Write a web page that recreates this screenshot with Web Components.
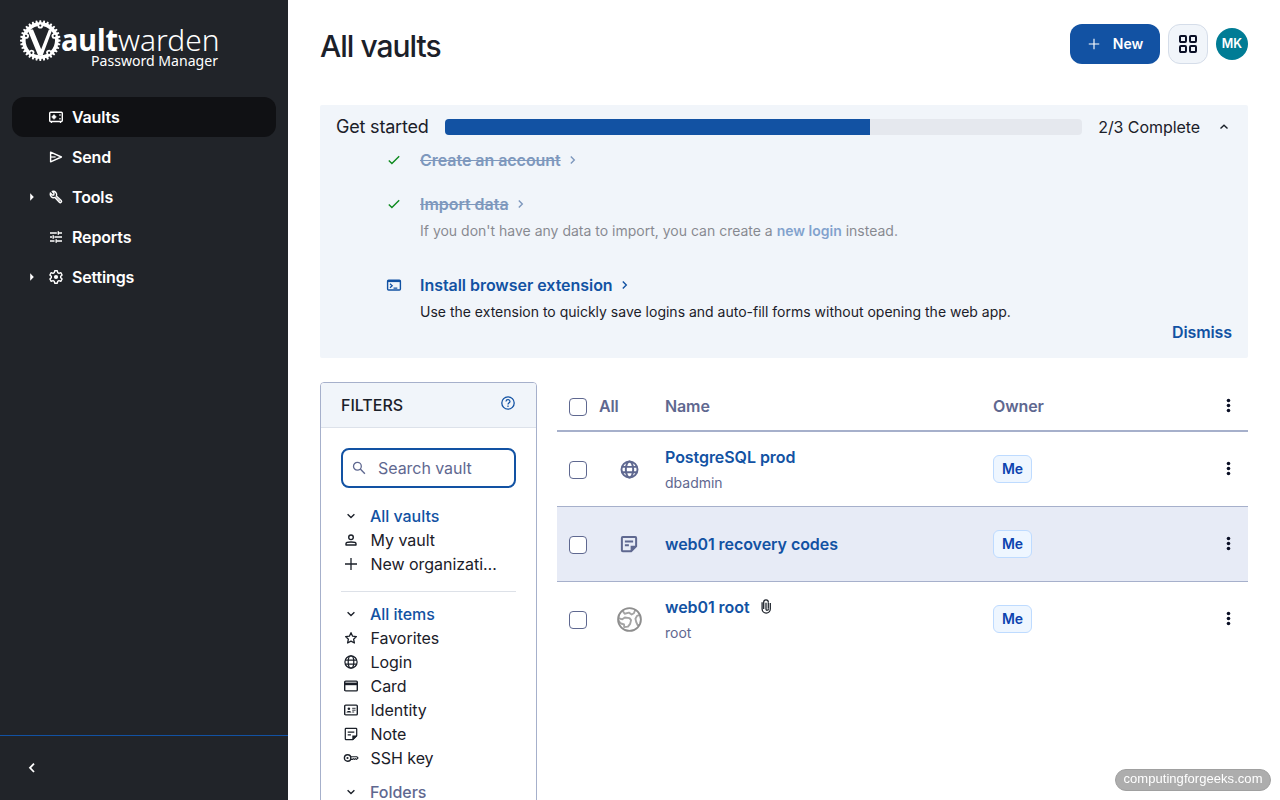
<!DOCTYPE html>
<html lang="en">
<head>
<meta charset="utf-8">
<title>All vaults | Vaultwarden</title>
<style>
  body {
    margin: 0;
    height: 100vh;
    overflow: hidden;
    font-family: Inter, "Liberation Sans", sans-serif;
    font-size: 16px;
    line-height: 24px;
    color: #1b2029;
    --primary: #1252a3;
    --muted: #5f6890;
    --line: #a6b0cb;
    --soft: #f1f5fa;
    --dark: #212429;
  }
</style>
</head>
<body>
<vw-app>
  <vw-sidebar slot="side">
    <vw-nav-item icon="vault" active>Vaults</vw-nav-item>
    <vw-nav-item icon="send">Send</vw-nav-item>
    <vw-nav-item icon="wrench" expandable>Tools</vw-nav-item>
    <vw-nav-item icon="sliders">Reports</vw-nav-item>
    <vw-nav-item icon="cog" expandable>Settings</vw-nav-item>
  </vw-sidebar>
  <vw-header initials="MK">All vaults</vw-header>
  <vw-onboarding done="2" total="3">
    <vw-task icon="check" done label="Create an account"></vw-task>
    <vw-task icon="check" done label="Import data">If you don't have any data to import, you can create a <b>new login</b> instead.</vw-task>
    <vw-task icon="terminal" label="Install browser extension">Use the extension to quickly save logins and auto-fill forms without opening the web app.</vw-task>
  </vw-onboarding>
  <vw-filters slot="filters">
    <vw-filter icon="down" heading>All vaults</vw-filter>
    <vw-filter icon="user">My vault</vw-filter>
    <vw-filter icon="plus">New organization</vw-filter>
    <hr>
    <vw-filter icon="down" heading>All items</vw-filter>
    <vw-filter icon="star">Favorites</vw-filter>
    <vw-filter icon="globe">Login</vw-filter>
    <vw-filter icon="card">Card</vw-filter>
    <vw-filter icon="identity">Identity</vw-filter>
    <vw-filter icon="note">Note</vw-filter>
    <vw-filter icon="key">SSH key</vw-filter>
    <vw-filter icon="down" heading quiet>Folders</vw-filter>
  </vw-filters>
  <vw-table slot="items">
    <vw-row icon="globe" name="PostgreSQL prod" sub="dbadmin"></vw-row>
    <vw-row icon="note" name="web01 recovery codes" hovered></vw-row>
    <vw-row icon="earth" name="web01 root" sub="root" attachment></vw-row>
  </vw-table>
</vw-app>
<vw-stamp>computingforgeeks.com</vw-stamp>

<script>
// 16x16 icons, drawn with currentColor
const ICONS = {
  vault: '<rect x="1.7" y="3.2" width="12.6" height="9.3" rx="1" stroke-width="1.4"/><path d="M3.5 12.5v1.5M12.5 12.5v1.5M12 5.2v1.6M12 9v1.6"/><circle cx="6" cy="7.9" r="1.9" fill="currentColor" stroke="none"/><path d="M6 5.2v5.4M3.4 7.9h5.2" stroke-width=".8"/>',
  send: '<path d="M2.6 3.2 13.4 8 2.6 12.8Z" stroke-width="1.4" stroke-linejoin="round"/><path d="M2.6 8h5"/>',
  wrench: '<path d="M2.4 4.1a3.4 3.4 0 0 0 4.5 4.3l4.5 4.8a1.2 1.2 0 0 0 1.8-1.7L8.4 7.1A3.4 3.4 0 0 0 4.3 2.5L6 4.3 5.8 6 4.2 6Z" stroke-width="1.4" stroke-linejoin="round"/><path d="m7.5 8 4.8 4.5" stroke-width="1"/>',
  sliders: '<path d="M2 4h6.8M11 4h3M10.3 2.3v3.4M2 8h2M6.4 8H14M5.2 6.3v3.4M2 12h4.5M9 12h5M8.2 10.3v3.4" stroke-width="1.4"/>',
  cog: '<path d="M6.7 1.8h2.6l.4 1.8 1.3.7 1.8-.6 1.3 2.3-1.4 1.3v1.4l1.4 1.3-1.3 2.3-1.8-.6-1.3.7-.4 1.8H6.7l-.4-1.8-1.3-.7-1.8.6L1.9 10l1.4-1.3V7.3L1.9 6l1.3-2.3 1.8.6 1.3-.7Z" stroke-width="1.4" stroke-linejoin="round"/><circle cx="8" cy="8" r="2.1" fill="currentColor" stroke="none"/>',
  expand: '<path d="M6.2 4.3 9.8 8l-3.6 3.7Z" fill="currentColor" stroke="none"/>',
  left: '<path d="M10 3.6 6 7.8l4 4.2" stroke-width="1.8"/>',
  right: '<path d="m5.8 4.5 3.5 3.5-3.5 3.5" stroke-width="1.4"/>',
  up: '<path d="m4.5 9.6 3.5-3.4 3.5 3.4" stroke-width="1.4"/>',
  down: '<path d="M4.6 6.3 8 9.5l3.4-3.2" stroke-width="1.4"/>',
  plus: '<path d="M8 2v12M2 8h12" stroke-width="1.3"/>',
  check: '<path d="m2.8 8.5 3.1 3.1 7.3-7.4" stroke-width="1.4"/>',
  terminal: '<rect x="1.6" y="3.2" width="12.8" height="9.8" rx="1" stroke-width="1.4"/><path d="M1.6 4.1h12.8" stroke-width="2"/><path d="m4 6.7 2.2 2L4 10.7M7.5 11h3.8"/>',
  help: '<circle cx="8" cy="8" r="6.2" stroke-width="1.3"/><path d="M6 6.4c.1-2.5 4-2.3 4 0 0 1.3-2 1.4-2 3.1M8 10.6v1.3" stroke-width="1.2"/>',
  search: '<circle cx="6.4" cy="6.2" r="3.9" stroke-width="1.3"/><path d="m9.3 9.1 4.6 4.6" stroke-width="1.4"/>',
  user: '<circle cx="8" cy="5.3" r="2.3" stroke-width="1.4"/><path d="M3 13v-1.3c0-2.2 10-2.2 10 0V13Z" stroke-width="1.4" stroke-linejoin="round"/>',
  star: '<path d="m8 2.7 1.6 3.5 3.8.4-2.8 2.6.8 3.8L8 11.1 4.6 13l.8-3.8-2.8-2.6 3.8-.4Z" stroke-width="1.3" stroke-linejoin="round"/>',
  globe: '<circle cx="8" cy="8" r="6.1"/><ellipse cx="8" cy="8" rx="2.8" ry="6.1"/><path d="M2.2 6h11.6M2.2 10.1h11.6"/>',
  card: '<rect x="1.7" y="3.1" width="12.6" height="9.8" rx="1" stroke-width="1.4"/><path d="M1.7 5.9h12.6" stroke-width="2.6"/>',
  identity: '<rect x="1.7" y="3.1" width="12.6" height="9.8" rx="1" stroke-width="1.4"/><circle cx="5.9" cy="6.7" r="1.3" fill="currentColor" stroke="none"/><path d="M3.4 10.6c0-2.3 5-2.3 5 0Z" fill="currentColor" stroke="none"/><path d="M9.2 6.3h3.4M9.2 8.2h3.4M9.2 10h2" stroke-width=".9"/>',
  note: '<path d="M3 2.4h10q.7 0 .7.7v6.6l-4 4H3q-.7 0-.7-.7V3.1q0-.7.7-.7Z"/><path d="M9.3 14V9.4H14v.9L10.2 14Z" fill="currentColor" stroke="none"/><path d="M4.7 6h6.6M4.7 8.9h3.2"/>',
  key: '<circle cx="4.6" cy="8" r="3.2" stroke-width="1.4"/><circle cx="4.5" cy="8" r="1.1" fill="currentColor" stroke="none"/><path d="M7.8 6.8h6.1L15 8l-1.4 1.4-1.2-.7-1 .7-1.1-.7-.8.7H7.8" stroke-width="1.1"/>',
  earth: '<path d="M3.6 2.5 4.9 4.3 7.6 3.6 9.4 4.8 10.8 4 11.6 2M1 7.2l2.4.7L5 6.7l3 .4 1 1.3-.6 2.4L7 12.6l-2.4.3-.1-1.7-2.3-.8L1 8.6M14.6 5.1l-1.8.6-1 1.8.5 2.1.9 2 1.2-.2" stroke="#a4a4a4" stroke-width="1.2" stroke-linejoin="round"/><circle cx="8" cy="8" r="7.3"/>',
  clip: '<path d="M10.3 4.2v6.6M5.7 10.9V4.1a2.3 2.3 0 0 1 4.6 0M12.3 5v6a4.1 4.1 0 0 1-8.2 0V4.3M8 4.8v6.4a1.1 1.1 0 0 0 2.3-.2" stroke-width="1.25"/>',
  dots: '<circle cx="8" cy="2.600" r="1.9" fill="currentColor" stroke="none"/><circle cx="8" cy="8" r="1.9" fill="currentColor" stroke="none"/><circle cx="8" cy="13.400" r="1.9" fill="currentColor" stroke="none"/>',
  grid: '<rect x=".9" y=".9" width="5.300" height="5.300" rx=".8"/><rect x="9.800" y=".9" width="5.300" height="5.300" rx=".8"/><rect x=".9" y="9.800" width="5.300" height="5.300" rx=".8"/><rect x="9.800" y="9.800" width="5.300" height="5.300" rx=".8"/>'
}

class Icon extends HTMLElement {
  connectedCallback() {
    if (this.shadowRoot) return
    const size = this.getAttribute('size') || 16
    const weight = this.getAttribute('weight') || 1.25
    this.attachShadow({ mode: 'open' }).innerHTML = `
      <style>
        :host { display: inline-flex; flex: none; }
        svg { display: block; overflow: visible; }
      </style>
      <svg width="${size}" height="${size}" viewBox="0 0 16 16" fill="none" stroke="currentColor" stroke-width="${weight}">${ICONS[this.getAttribute('name')]}</svg>
    `
  }
}
customElements.define('vw-icon', Icon)

class App extends HTMLElement {
  constructor() {
    super()
    this.attachShadow({ mode: 'open' }).innerHTML = `
      <style>
        :host {
          display: grid;
          grid-template-columns: 288px 1fr;
          height: 100vh;
          background: #fff;
        }
        main {
          padding: 24px 32px 0;
          overflow: hidden;
        }
        .columns {
          display: grid;
          grid-template-columns: 217px 1fr;
          gap: 20px;
          align-items: start;
          margin-top: 24px;
        }
      </style>
      <slot name="side"></slot>
      <main>
        <slot></slot>
        <div class="columns">
          <slot name="filters"></slot>
          <slot name="items"></slot>
        </div>
      </main>
    `
  }
}
customElements.define('vw-app', App)

class Logo extends HTMLElement {
  constructor() {
    super()
    let teeth = ''
    for (let i = 0; i < 32; i++) {
      teeth += `<path d="M-1.3-17.5-.8-20.3H.8L1.3-17.5Z" transform="rotate(${i * 11.25})"/>`
    }
    let bolts = ''
    for (let i = 0; i < 5; i++) {
      bolts += `<g transform="rotate(${i * 72})"><circle cy="-14.7" r="2.7"/><circle cy="-15" r="1.1" fill="#212429"/></g>`
    }
    this.attachShadow({ mode: 'open' }).innerHTML = `
      <style>
        :host { display: block; }
        svg { display: block; }
        text { font-family: "Noto Sans", "Open Sans", sans-serif; fill: #fff; }
      </style>
      <svg width="204" height="56" viewBox="18 16 204 56">
        <g transform="translate(40.3 40.600)" fill="#fff">
          <circle r="16.500" fill="none" stroke="#fff" stroke-width="3.600"/>
          ${teeth}${bolts}
          <path d="M-12.800-11H-7.300L.9 8.600 8.600-11h3.400L2.300 15H-2.200Z"/>
        </g>
        <text x="61" y="51" font-size="29.500" font-weight="700" textLength="57" lengthAdjust="spacingAndGlyphs">ault</text>
        <text x="118" y="51" font-size="29" font-weight="300" textLength="101.500" lengthAdjust="spacingAndGlyphs">warden</text>
        <text x="91" y="65.500" font-size="14.500" textLength="127" lengthAdjust="spacingAndGlyphs">Password Manager</text>
      </svg>
    `
  }
}
customElements.define('vw-logo', Logo)

class Sidebar extends HTMLElement {
  constructor() {
    super()
    this.attachShadow({ mode: 'open' }).innerHTML = `
      <style>
        :host {
          display: flex;
          flex-direction: column;
          background: var(--dark);
          color: #fff;
        }
        header { padding: 16px 18px 25px; }
        nav {
          flex: 1;
          padding: 0 12px;
        }
        footer {
          display: flex;
          align-items: center;
          height: 64px;
          padding-left: 24px;
          border-top: 1px solid var(--primary);
        }
      </style>
      <header><vw-logo></vw-logo></header>
      <nav><slot></slot></nav>
      <footer><vw-icon name="left"></vw-icon></footer>
    `
  }
}
customElements.define('vw-sidebar', Sidebar)

class NavItem extends HTMLElement {
  connectedCallback() {
    if (this.shadowRoot) return
    this.attachShadow({ mode: 'open' }).innerHTML = `
      <style>
        :host {
          display: grid;
          grid-template-columns: 16px 16px 1fr;
          gap: 8px;
          align-items: center;
          height: 40px;
          padding: 0 12px;
          border-radius: 12px;
          font-weight: 600;
          letter-spacing: -.15px;
        }
        :host([active]) { background: #101114; }
        .arrow { display: flex; }
      </style>
      <span class="arrow">${this.hasAttribute('expandable') ? '<vw-icon name="expand"></vw-icon>' : ''}</span>
      <vw-icon name="${this.getAttribute('icon')}"></vw-icon>
      <slot></slot>
    `
  }
}
customElements.define('vw-nav-item', NavItem)

class Header extends HTMLElement {
  connectedCallback() {
    if (this.shadowRoot) return
    this.attachShadow({ mode: 'open' }).innerHTML = `
      <style>
        :host {
          display: flex;
          align-items: flex-start;
          gap: 8px;
          height: 81px;
        }
        h1 {
          flex: 1;
          margin: 4px 0 0;
          font-size: 30px;
          line-height: 36px;
          font-weight: 500;
          letter-spacing: -1px;
        }
        button {
          box-sizing: border-box;
          display: flex;
          align-items: center;
          justify-content: center;
          height: 40px;
          padding: 0;
          border: 0;
          border-radius: 12px;
          font: 600 14px/20px Inter, sans-serif;
        }
        .new {
          width: 90px;
          gap: 12px;
          background: var(--primary);
          color: #fff;
        }
        .apps {
          width: 40px;
          border: 1px solid #d5dde9;
          background: var(--soft);
          color: #0b1026;
        }
        .avatar {
          display: grid;
          place-items: center;
          width: 32px;
          height: 32px;
          margin-top: 4px;
          border-radius: 50%;
          background: #007c95;
          color: #fff;
          font-size: 12.500px;
          font-weight: 600;
        }
      </style>
      <h1><slot></slot></h1>
      <button class="new"><vw-icon name="plus" size="14"></vw-icon>New</button>
      <button class="apps"><vw-icon name="grid" size="18" weight="1.78"></vw-icon></button>
      <div class="avatar">${this.getAttribute('initials')}</div>
    `
  }
}
customElements.define('vw-header', Header)

class Onboarding extends HTMLElement {
  connectedCallback() {
    if (this.shadowRoot) return
    const done = this.getAttribute('done')
    const total = this.getAttribute('total')
    this.attachShadow({ mode: 'open' }).innerHTML = `
      <style>
        :host {
          box-sizing: border-box;
          display: flex;
          flex-direction: column;
          height: 253px;
          padding: 8px 16px 12px;
          border-radius: 2px;
          background: var(--soft);
        }
        .top {
          display: flex;
          flex: none;
          align-items: center;
          gap: 16px;
          height: 28px;
        }
        .title { font-size: 18px; letter-spacing: -.2px; }
        .count { letter-spacing: -.07px; }
        .bar {
          flex: 1;
          height: 16px;
          border-radius: 4px;
          background: #e5e8ee;
          overflow: hidden;
        }
        .bar div {
          width: ${done / total * 100}%;
          height: 100%;
          background: var(--primary);
        }
        .tasks {
          flex: 1;
          min-height: 0;
          padding: 7px 0 0 50px;
        }
        .dismiss {
          align-self: flex-end;
          flex: none;
          height: 26px;
          color: var(--primary);
          font-weight: 600;
          letter-spacing: -.1px;
        }
      </style>
      <div class="top">
        <span class="title">Get started</span>
        <div class="bar"><div></div></div>
        <span class="count">${done}/${total} Complete</span>
        <vw-icon name="up"></vw-icon>
      </div>
      <div class="tasks"><slot></slot></div>
      <span class="dismiss">Dismiss</span>
    `
  }
}
customElements.define('vw-onboarding', Onboarding)

class Task extends HTMLElement {
  connectedCallback() {
    if (this.shadowRoot) return
    this.attachShadow({ mode: 'open' }).innerHTML = `
      <style>
        :host {
          display: grid;
          grid-template-columns: 16px 1fr;
          column-gap: 18px;
          margin-bottom: 20px;
          color: var(--primary);
        }
        :host(:last-child) { margin-bottom: 0; }
        .mark { margin-top: 4px; }
        .label {
          display: flex;
          align-items: center;
          gap: 4px;
          font-weight: 600;
          letter-spacing: -.04px;
        }
        p {
          margin: 5px 0 12px;
          font-size: 14px;
          line-height: 20px;
          color: #1b2029;
        }
        :host(:last-child) p { margin-bottom: 0; }
        ::slotted(b) { color: var(--primary); font-weight: 600; }
        :host([done]) .mark { color: #0e8a1e; }
        :host([done]) .label { color: #7e98bd; }
        :host([done]) p { opacity: .5; }
        :host([done]) .label span { text-decoration: line-through; }
      </style>
      <vw-icon class="mark" name="${this.getAttribute('icon')}"></vw-icon>
      <div>
        <div class="label"><span>${this.getAttribute('label')}</span><vw-icon name="right"></vw-icon></div>
        ${this.textContent.trim() ? '<p><slot></slot></p>' : ''}
      </div>
    `
  }
}
customElements.define('vw-task', Task)

class Filters extends HTMLElement {
  constructor() {
    super()
    this.attachShadow({ mode: 'open' }).innerHTML = `
      <style>
        :host {
          box-sizing: border-box;
          display: block;
          height: 440px;
          border: 1px solid var(--line);
          border-radius: 4px;
          overflow: hidden;
        }
        header {
          display: flex;
          align-items: center;
          justify-content: space-between;
          height: 44px;
          padding: 0 20px;
          border-bottom: 1px solid #dde2ea;
          background: var(--soft);
          font-weight: 500;
        }
        header vw-icon { color: var(--primary); margin-top: -4px; }
        .body { padding: 20px; }
        .search {
          box-sizing: border-box;
          display: flex;
          align-items: center;
          gap: 11px;
          height: 40px;
          margin-bottom: 16px;
          padding-left: 8px;
          border: 2px solid var(--primary);
          border-radius: 8px;
          color: var(--muted);
          letter-spacing: -.05px;
        }
        ::slotted(hr) {
          height: 1px;
          margin: 15px 0 10px;
          border: 0;
          background: #dde1e8;
        }
      </style>
      <header>FILTERS<vw-icon name="help"></vw-icon></header>
      <div class="body">
        <div class="search"><vw-icon name="search"></vw-icon>Search vault</div>
        <slot></slot>
      </div>
    `
  }
}
customElements.define('vw-filters', Filters)

class Filter extends HTMLElement {
  connectedCallback() {
    if (this.shadowRoot) return
    this.attachShadow({ mode: 'open' }).innerHTML = `
      <style>
        :host {
          display: flex;
          align-items: center;
          gap: 11.500px;
          height: 24px;
          padding: 0 16px 0 2px;
          letter-spacing: -.04px;
        }
        :host([heading]) { gap: 11px; }
        :host([quiet]) { margin-top: 10px; }
        span {
          overflow: hidden;
          white-space: nowrap;
          text-overflow: ellipsis;
        }
        :host([heading]) span { color: var(--primary); font-weight: 500; }
        :host([quiet]) span { color: var(--muted); }
      </style>
      <vw-icon name="${this.getAttribute('icon')}"></vw-icon>
      <span><slot></slot></span>
    `
  }
}
customElements.define('vw-filter', Filter)

class Checkbox extends HTMLElement {
  constructor() {
    super()
    this.attachShadow({ mode: 'open' }).innerHTML = `
      <style>
        :host {
          box-sizing: border-box;
          display: block;
          width: 18px;
          height: 18px;
          border: 1px solid var(--muted);
          border-radius: 4px;
          background: #fff;
        }
      </style>
    `
  }
}
customElements.define('vw-checkbox', Checkbox)

class Table extends HTMLElement {
  constructor() {
    super()
    this.attachShadow({ mode: 'open' }).innerHTML = `
      <style>
        :host { display: block; }
        .head {
          display: grid;
          grid-template-columns: 30px 66px 328px 1fr 16px;
          align-items: center;
          height: 48px;
          padding: 0 12px;
          border-bottom: 2px solid var(--line);
          color: var(--muted);
          font-weight: 600;
          letter-spacing: -.12px;
        }
        .head vw-checkbox { margin-top: 2px; }
        .head vw-icon { color: #0b1026; justify-self: center; margin-top: -1px; }
      </style>
      <div class="head">
        <vw-checkbox></vw-checkbox>
        <span>All</span>
        <span>Name</span>
        <span>Owner</span>
        <vw-icon name="dots" size="15"></vw-icon>
      </div>
      <slot></slot>
    `
  }
}
customElements.define('vw-table', Table)

class Row extends HTMLElement {
  connectedCallback() {
    if (this.shadowRoot) return
    const icon = this.getAttribute('icon')
    const sub = this.getAttribute('sub')
    const [size, weight] = { globe: [21, 1.5], note: [20, 1.6], earth: [25, 1.2] }[icon]
    this.attachShadow({ mode: 'open' }).innerHTML = `
      <style>
        :host {
          display: grid;
          grid-template-columns: 30px 60px 6px 328px 1fr 16px;
          align-items: center;
          height: 74px;
          padding: 0 12px;
          border-bottom: 1px solid var(--line);
        }
        :host([hovered]) { background: #e7ebf6; }
        :host(:last-child) { border-bottom-color: transparent; }
        vw-checkbox { margin-top: 2px; }
        .type { justify-self: center; color: var(--muted); }
        .type[name=earth] { color: #8e8e8e; }
        .name {
          display: flex;
          align-items: center;
          gap: 8px;
          color: var(--primary);
          font-weight: 600;
          letter-spacing: -.06px;
        }
        .name vw-icon { color: #1b2029; margin-top: -3px; }
        .sub {
          margin-top: 4px;
          font-size: 14px;
          line-height: 20px;
          color: var(--muted);
        }
        .owner {
          box-sizing: border-box;
          width: 39px;
          height: 28px;
          border: 1px solid #bedbff;
          border-radius: 6px;
          background: #eef6ff;
          color: #0d43af;
          font-size: 14px;
          line-height: 26px;
          font-weight: 600;
          text-align: center;
        }
        .menu { justify-self: center; margin-top: -1px; color: #0b1026; }
      </style>
      <vw-checkbox></vw-checkbox>
      <vw-icon class="type" name="${icon}" size="${size}" weight="${weight}"></vw-icon>
      <i></i>
      <div>
        <div class="name">${this.getAttribute('name')}${this.hasAttribute('attachment') ? '<vw-icon name="clip"></vw-icon>' : ''}</div>
        ${sub ? `<div class="sub">${sub}</div>` : ''}
      </div>
      <div class="owner">Me</div>
      <vw-icon class="menu" name="dots" size="15"></vw-icon>
    `
  }
}
customElements.define('vw-row', Row)

class Stamp extends HTMLElement {
  constructor() {
    super()
    this.attachShadow({ mode: 'open' }).innerHTML = `
      <style>
        :host {
          box-sizing: border-box;
          position: fixed;
          right: 9px;
          bottom: 9px;
          width: 156px;
          height: 22px;
          border: 1px solid #a0a0a0;
          border-radius: 11px;
          background: #adadad;
          color: #fff;
          font: 13px/18px "Liberation Sans", sans-serif;
          letter-spacing: .05px;
          text-align: center;
        }
      </style>
      <slot></slot>
    `
  }
}
customElements.define('vw-stamp', Stamp)
</script>
</body>
</html>
